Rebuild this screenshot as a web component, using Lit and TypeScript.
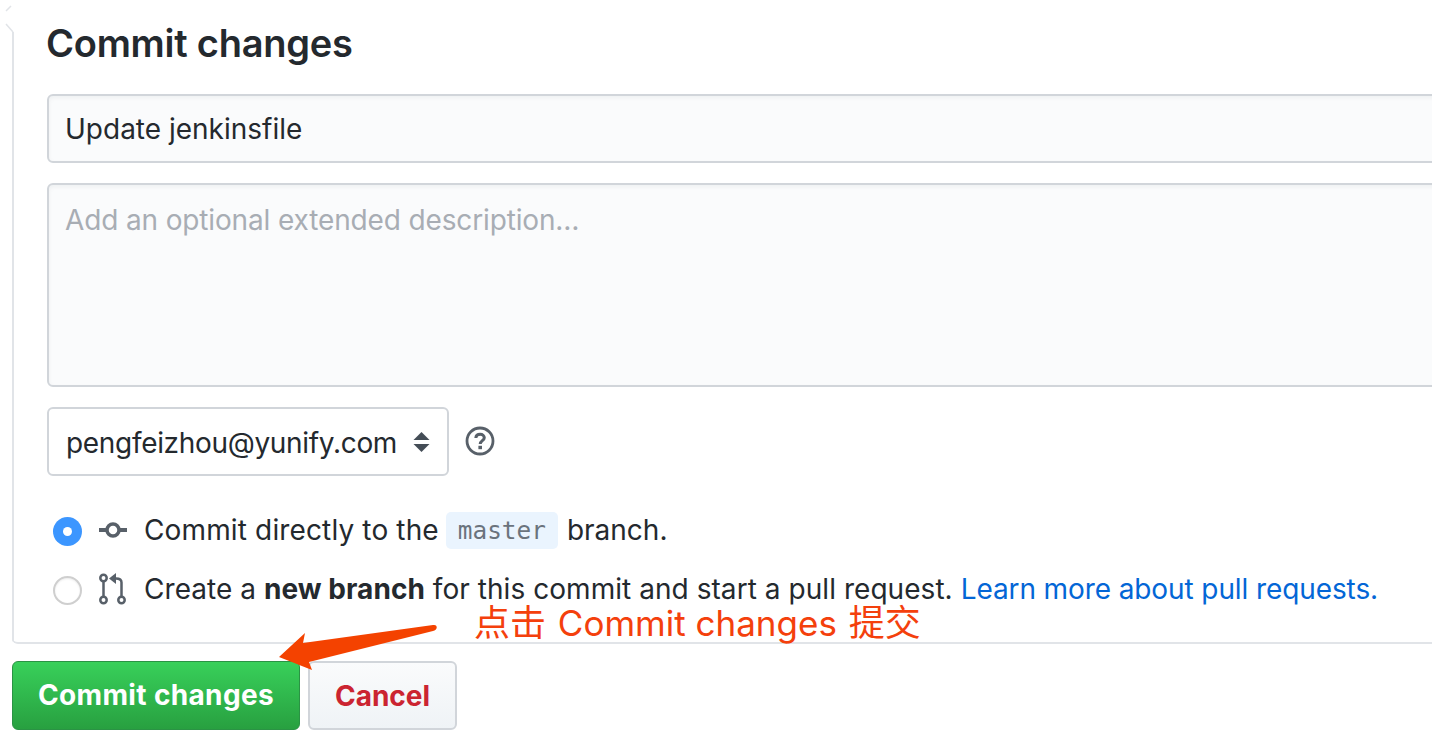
import { LitElement, html, css } from "lit";
import { customElement } from "lit/decorators.js";

@customElement("app-root")
export class AppRoot extends LitElement {
  static styles = css`
    :host {
      display: block;
      position: relative;
      width: 1432px;
      height: 744px;
      overflow: hidden;
      background: #fff;
      color: #24292e;
      font-family: Inter, "Noto Sans CJK SC", sans-serif;
      font-size: 28px;
    }
    .page {
      padding-left: 12px;
    }
    .card {
      position: relative;
      box-sizing: border-box;
      height: 644px;
      margin-right: -20px;
      padding: 20px 0 0 35px;
      border-bottom: 2px solid #e1e4e8;
      border-bottom-left-radius: 6px;
    }
    .card::before {
      content: "";
      position: absolute;
      left: 0;
      top: 32px;
      bottom: 0;
      border-left: 2px solid #e1e4e8;
      border-bottom-left-radius: 6px;
    }
    h2 {
      margin: 0 0 0 -1px;
      font-size: 38px;
      font-weight: 600;
      line-height: 46px;
      letter-spacing: -0.25px;
    }
    .field {
      box-sizing: border-box;
      margin-right: -20px;
      padding: 0 17px;
      background: #fafbfc;
      border: 2px solid #d1d5da;
      border-radius: 6px;
      box-shadow: inset 0 2px 4px rgba(27, 31, 35, 0.05);
    }
    .title {
      height: 69px;
      margin-top: 28px;
      line-height: 66px;
      text-indent: -1px;
    }
    .desc {
      height: 204px;
      margin-top: 20px;
      padding-top: 15px;
      line-height: 40px;
      letter-spacing: -0.14px;
      text-indent: -1px;
      color: #a8adb4;
    }
    .author-row {
      display: flex;
      align-items: center;
      gap: 16px;
      margin-top: 20px;
    }
    .author {
      box-sizing: border-box;
      display: flex;
      align-items: center;
      justify-content: space-between;
      width: 402px;
      height: 69px;
      padding: 2px 17px 0 17px;
      background: #fff;
      border: 2px solid #d1d5da;
      border-radius: 6px;
      letter-spacing: -0.32px;
    }
    .author svg {
      margin-top: -2px;
    }
    .help {
      margin-top: -2px;
    }
    .options {
      display: flex;
      flex-direction: column;
      gap: 25px;
      margin-top: 37px;
      margin-left: 6px;
    }
    .option {
      display: flex;
      align-items: center;
      height: 34px;
      white-space: nowrap;
    }
    .direct {
      letter-spacing: 0.14px;
    }
    .direct .tail {
      letter-spacing: 0;
    }
    .branch {
      letter-spacing: 0.05px;
    }
    .radio {
      box-sizing: border-box;
      flex: none;
      display: flex;
      align-items: center;
      justify-content: center;
      width: 29px;
      height: 29px;
      margin-top: 2px;
      border-radius: 50%;
      border: 2px solid #cfcfcf;
      background: #fff;
      box-shadow: inset 0 1px 2px rgba(0, 0, 0, 0.08);
    }
    .radio.on {
      border: none;
      background: #3c96ff;
      box-shadow: none;
    }
    .radio.on::after {
      content: "";
      width: 9px;
      height: 9px;
      border-radius: 50%;
      background: #fff;
    }
    .icon {
      flex: none;
      width: 30px;
      margin: 0 16px;
      display: block;
    }
    code {
      display: inline-block;
      margin: 0 9px 0 7px;
      padding: 0 12px;
      background: #eaf4fe;
      border-radius: 5px;
      color: #6a737d;
      font-family: "DejaVu Sans Mono", monospace;
      font-size: 24.4px;
      line-height: 37px;
      letter-spacing: 0;
    }
    b {
      font-weight: 700;
    }
    a {
      color: #0366d6;
      text-decoration: none;
      letter-spacing: -0.1px;
    }
    .actions {
      display: flex;
      gap: 8px;
      margin-top: 17px;
    }
    .btn {
      box-sizing: border-box;
      height: 69px;
      line-height: 67px;
      text-align: center;
      font-weight: 700;
      border-radius: 6px;
    }
    .commit {
      width: 288px;
      color: #fff;
      background: linear-gradient(#38d05a, #28a040);
      border: 1px solid #2a9344;
      letter-spacing: 0.35px;
    }
    .cancel {
      width: 149px;
      color: #cb2431;
      background: linear-gradient(#fafbfc, #eff3f6);
      border: 2px solid #d1d5da;
    }
    .notch {
      position: absolute;
      left: 5px;
      top: 5px;
    }
    .note {
      position: absolute;
      left: 474px;
      top: 606px;
      color: #f4400c;
      font-size: 35px;
      line-height: 34px;
      white-space: nowrap;
    }
    .note span {
      font-size: 36px;
    }
    .note .first {
      margin-right: 2px;
    }
    .note .last {
      margin-left: 2px;
    }
    .arrow {
      position: absolute;
      left: 270px;
      top: 615px;
    }
  `;

  render() {
    return html`
      <div class="page">
        <div class="card">
          <h2>Commit changes</h2>
          <div class="field title">Update jenkinsfile</div>
          <div class="field desc">Add an optional extended description…</div>
          <div class="author-row">
            <div class="author">
              <span>pengfeizhou@yunify.com</span>
              <svg width="17" height="20" viewBox="0 0 17 20">
                <path d="M8.500 0 L16.500 8 H0.500 Z M0.500 12 H16.500 L8.500 20 Z" fill="#444d56" />
              </svg>
            </div>
            <svg class="help" width="30" height="30" viewBox="0 0 30 30" fill="none">
              <circle cx="15" cy="15" r="13" stroke="#586069" stroke-width="2.800" />
              <path
                d="M10.800 12 C11 9.500 13 8.300 15.200 8.300 C17.600 8.300 19.300 9.800 19.300 11.800 C19.300 14.600 15.200 14.800 15.200 18"
                stroke="#586069"
                stroke-width="3"
              />
              <rect x="13.400" y="19.800" width="3.600" height="3.400" fill="#586069" />
            </svg>
          </div>
          <div class="options">
            <div class="option direct">
              <span class="radio on"></span>
              <svg class="icon" height="30" viewBox="0 0 30 30" fill="none">
                <circle cx="15" cy="15" r="6" stroke="#586069" stroke-width="3.500" />
                <path d="M1 15 H9 M21 15 H29" stroke="#586069" stroke-width="4" />
              </svg>
              <span>Commit directly to the</span>
              <code>master</code>
              <span class="tail">branch.</span>
            </div>
            <div class="option branch">
              <span class="radio"></span>
              <svg class="icon" height="32" viewBox="0 0 30 32" fill="none">
                <g stroke="#586069" stroke-width="2.500">
                  <circle cx="5.500" cy="5" r="3.200" />
                  <circle cx="5.500" cy="27" r="3.200" />
                  <circle cx="23.500" cy="27" r="3.200" />
                  <path d="M5.500 8.500 V23.500 M23.500 23.500 V9.500 C23.500 6.500 21.500 5.500 18 5.500" />
                </g>
                <path d="M18 0 V11 L11 5.500 Z" fill="#586069" />
              </svg>
              <span>Create a <b>new branch</b> for this commit and start a pull request.
                <a>Learn more about pull requests.</a></span>
            </div>
          </div>
        </div>
        <div class="actions">
          <div class="btn commit">Commit changes</div>
          <div class="btn cancel">Cancel</div>
        </div>
      </div>
      <svg class="notch" width="12" height="30" viewBox="0 0 12 30" fill="none">
        <path d="M1 6 L6 1 M1 19 L8 27" stroke="#e1e4e8" stroke-width="1.500" />
      </svg>
      <svg class="arrow" width="170" height="60" viewBox="0 0 170 60">
        <path
          d="M9 42 L35 18 L33 28 L163 10 C168 9 168 15 163 16 L39 47 L42 55 Z"
          fill="#f44200"
        />
      </svg>
      <div class="note"><span class="first">点击</span> Commit changes <span class="last">提交</span></div>
    `;
  }
}
